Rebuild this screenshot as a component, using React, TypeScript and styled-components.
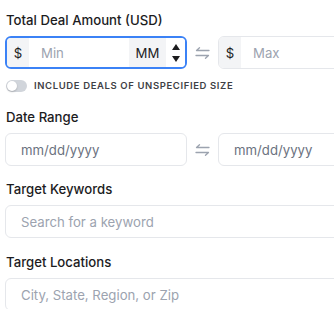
import styled, { createGlobalStyle } from 'styled-components';

const GlobalStyle = createGlobalStyle`
  html, body {
    margin: 0;
    padding: 0;
    background: #ffffff;
    overflow: hidden;
  }
  body {
    font-family: Inter, "Noto Sans", sans-serif;
    color: #1c1c1e;
  }
  * {
    box-sizing: border-box;
  }
`;

const Form = styled.form`
  width: 395px;
  padding: 10px 0 0 5px;
  display: flex;
  flex-direction: column;
`;

const Field = styled.div<{ $after?: number }>`
  display: flex;
  flex-direction: column;
  margin-bottom: ${(p) => p.$after ?? 13}px;
`;

const Label = styled.label`
  display: block;
  font-size: 13.2px;
  font-weight: 500;
  line-height: 19px;
  color: #1c1c1e;
  margin: 1px 0 6px 1px;
`;

const RangeRow = styled.div`
  display: grid;
  grid-template-columns: 182px 31px 182px;
  align-items: center;
`;

const SwapIcon = styled.span`
  display: flex;
  justify-content: center;
  color: #9ca3af;
`;

const Group = styled.div<{ $focused?: boolean }>`
  display: flex;
  height: 33px;
  border: ${(p) => (p.$focused ? '2px solid #3b82f6' : '1px solid #e5e7eb')};
  border-radius: 6px;
  overflow: hidden;
  background: #ffffff;
`;

const Addon = styled.span<{ $width: number }>`
  flex: none;
  width: ${(p) => p.$width}px;
  display: flex;
  align-items: center;
  justify-content: center;
  background: #f3f4f6;
  font-size: 13.2px;
  color: #1c1c1e;
`;

const Input = styled.input<{ $pad?: number }>`
  flex: 1;
  min-width: 0;
  width: 100%;
  height: 100%;
  border: none;
  outline: none;
  background: transparent;
  padding: 0 0 0 ${(p) => p.$pad ?? 12}px;
  font-family: Inter, "Noto Sans", sans-serif;
  font-size: 13.2px;
  color: #1c1c1e;
  caret-color: #1c1c1e;

  &::placeholder {
    color: #9ca3af;
  }
`;

const Box = styled(Input)<{ $muted?: boolean }>`
  flex: none;
  height: 33px;
  border: 1px solid #e5e7eb;
  border-radius: 6px;
  background: #ffffff;

  &::placeholder {
    color: ${(p) => (p.$muted ? '#6b7280' : '#9ca3af')};
  }
`;

const Spinner = styled.span`
  flex: none;
  width: 19px;
  display: flex;
  flex-direction: column;
  align-items: center;
  justify-content: center;
  gap: 6px;
  background: #ffffff;
`;

const Arrow = styled.span<{ $up?: boolean }>`
  width: 0;
  height: 0;
  border-left: 4.5px solid transparent;
  border-right: 4.5px solid transparent;
  ${(p) =>
    p.$up
      ? 'border-bottom: 6px solid #1c1c1e;'
      : 'border-top: 6px solid #1c1c1e;'}
`;

const ToggleRow = styled.div`
  display: flex;
  align-items: center;
  gap: 7px;
  height: 12px;
  margin: 11px 0 15px 1px;
`;

const Track = styled.span`
  position: relative;
  flex: none;
  width: 21px;
  height: 12px;
  border-radius: 6px;
  background: #d1d5db;
`;

const Knob = styled.span`
  position: absolute;
  top: 1px;
  left: 1px;
  width: 10px;
  height: 10px;
  border-radius: 50%;
  background: #ffffff;
  box-shadow: 0 1px 2px rgba(0, 0, 0, 0.2);
`;

const ToggleText = styled.span`
  font-size: 9.5px;
  font-weight: 600;
  letter-spacing: 0.62px;
  text-transform: uppercase;
  color: #3f3f46;
  line-height: 12px;
`;

const Swap = () => (
  <SwapIcon>
    <svg width="15" height="12" viewBox="0 0 15 12" fill="none" stroke="currentColor" strokeWidth="1.3" strokeLinecap="round" strokeLinejoin="round">
      <path d="M14 3.5H1.5L4.5 0.8" />
      <path d="M1 8.5H13.5L10.5 11.2" />
    </svg>
  </SwapIcon>
);

const AmountInput = ({ placeholder, focused }: { placeholder: string; focused?: boolean }) => (
  <Group $focused={focused}>
    <Addon $width={22}>$</Addon>
    <Input placeholder={placeholder} autoFocus={focused} />
    <Addon $width={37}>MM</Addon>
    <Spinner>
      <Arrow $up />
      <Arrow />
    </Spinner>
  </Group>
);

const App = () => (
  <>
    <GlobalStyle />
    <Form onSubmit={(e) => e.preventDefault()}>
      <Field $after={0}>
        <Label>Total Deal Amount (USD)</Label>
        <RangeRow>
          <AmountInput placeholder="Min" focused />
          <Swap />
          <AmountInput placeholder="Max" />
        </RangeRow>
      </Field>
      <ToggleRow>
        <Track>
          <Knob />
        </Track>
        <ToggleText>Include deals of unspecified size</ToggleText>
      </ToggleRow>
      <Field>
        <Label>Date Range</Label>
        <RangeRow>
          <Box $pad={15} $muted placeholder="mm/dd/yyyy" />
          <Swap />
          <Box $pad={15} $muted placeholder="mm/dd/yyyy" />
        </RangeRow>
      </Field>
      <Field $after={14}>
        <Label>Target Keywords</Label>
        <Box $pad={15} placeholder="Search for a keyword" />
      </Field>
      <Field>
        <Label>Target Locations</Label>
        <Box $pad={15} placeholder="City, State, Region, or Zip" />
      </Field>
    </Form>
  </>
);

export default App;
